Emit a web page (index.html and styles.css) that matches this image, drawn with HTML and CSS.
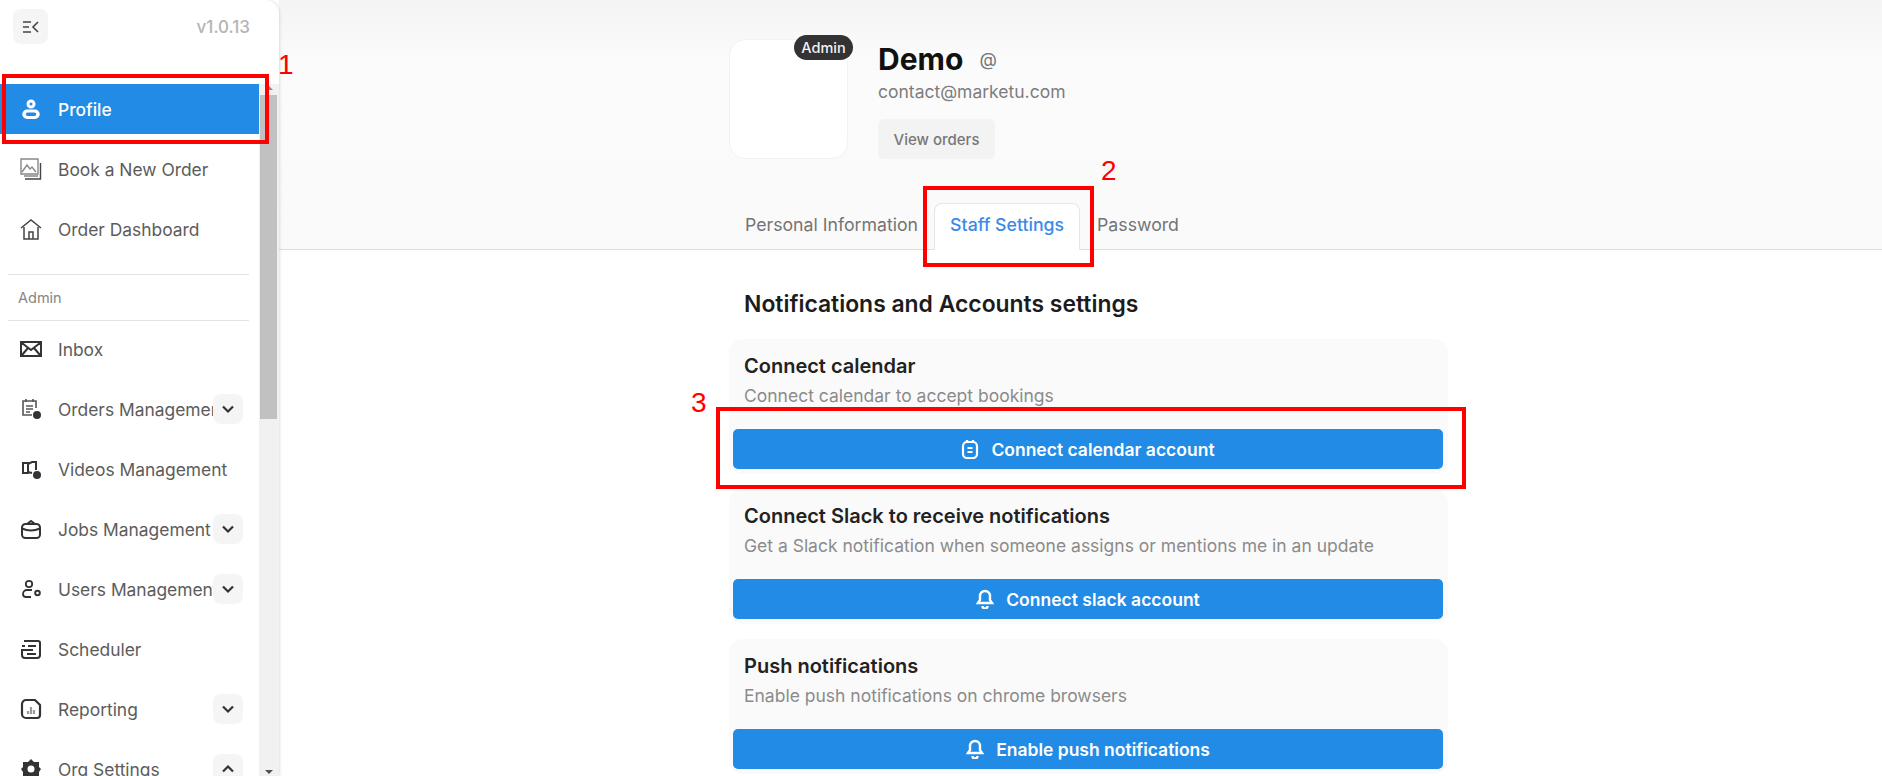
FILE: index.html
```html
<!DOCTYPE html>
<html lang="en">
<head>
  <meta charset="UTF-8" />
  <title>Profile</title>
  <link rel="stylesheet" href="styles.css">
</head>
<body>
  <aside class="sidebar">
    <div class="side-top">
      <button class="collapse">
        <svg width="18" height="14" viewBox="0 0 18 14" fill="none" stroke="#444" stroke-width="1.6"><path d="M1 2h8M1 7h6M1 12h8M16 2l-5 5 5 5"/></svg>
      </button>
      <span class="version">v1.0.13</span>
    </div>
    <div class="side-scroll">
      <nav class="nav">
        <a class="nav-item active">
          <svg class="nav-icon" viewBox="0 0 22 22" fill="#fff"><path fill-rule="evenodd" d="M11 1.500a4.500 4.500 0 1 1 0 9 4.500 4.500 0 0 1 0-9zm0 3a1.500 1.500 0 1 0 0 3 1.500 1.500 0 0 0 0-3zM7 11.500h8a4.750 4.750 0 0 1 0 9.500H7a4.750 4.750 0 0 1 0-9.500zm.5 3a1.750 1.750 0 0 0 0 3.500h7a1.750 1.750 0 0 0 0-3.500z"/></svg>
          <span class="nav-label">Profile</span>
        </a>
        <a class="nav-item">
          <svg class="nav-icon" viewBox="0 0 22 22" fill="none" stroke="#444" stroke-width="1.400"><path d="M1 1h17v15H1z" stroke="#888"/><path d="M20.500 5v16H5"/><path d="M2 14l5-7 3 4 2-2 4 5M4 18h14" stroke="#888"/></svg>
          <span class="nav-label">Book a New Order</span>
        </a>
        <a class="nav-item">
          <svg class="nav-icon" viewBox="0 0 22 22" fill="none" stroke="#444" stroke-width="1.500"><path d="M1 10l10-8 10 8M4 9v12h14V9M9 21v-7h4v7"/></svg>
          <span class="nav-label">Order Dashboard</span>
        </a>
        <div class="nav-group">Admin</div>
        <a class="nav-item">
          <svg class="nav-icon" viewBox="0 0 22 22" fill="none" stroke="#333" stroke-width="2"><path d="M1 4h20v14H1zM2 5l9 7 9-7M2 17l6-7M20 17l-6-7"/></svg>
          <span class="nav-label">Inbox</span>
        </a>
        <a class="nav-item">
          <svg class="nav-icon" viewBox="0 0 22 22" fill="none" stroke="#555" stroke-width="1.600"><path d="M12 17H3V3h13v7M6 1v3M13 1v3M6 8h7M6 11h7M6 14h4"/><circle cx="17" cy="17" r="4" fill="#333" stroke="none"/></svg>
          <span class="nav-label clip">Orders Management</span>
          <span class="chev"><svg width="14" height="14" viewBox="0 0 14 14" fill="none" stroke="#333" stroke-width="2.200"><path d="M2 4.500l5 5 5-5"/></svg></span>
        </a>
        <a class="nav-item">
          <svg class="nav-icon" viewBox="0 0 22 22" fill="none" stroke="#333" stroke-width="2"><path d="M3 5h5v10H3zM8 6l4-2h4v8M8 14l4 1"/><circle cx="17" cy="17" r="4" fill="#333" stroke="none"/></svg>
          <span class="nav-label">Videos Management</span>
        </a>
        <a class="nav-item">
          <svg class="nav-icon" viewBox="0 0 22 22" fill="none" stroke="#333" stroke-width="2"><path d="M7 6l4-3 4 3"/><rect x="2" y="6" width="18" height="14" rx="3.500"/><path d="M2 10.500q9 4 18 0"/></svg>
          <span class="nav-label clip">Jobs Management</span>
          <span class="chev"><svg width="14" height="14" viewBox="0 0 14 14" fill="none" stroke="#333" stroke-width="2.200"><path d="M2 4.500l5 5 5-5"/></svg></span>
        </a>
        <a class="nav-item">
          <svg class="nav-icon" viewBox="0 0 22 22" fill="none" stroke="#333" stroke-width="1.800"><circle cx="9" cy="6" r="3.200"/><path d="M12 12H7a4 4 0 0 0-4 4v0a3 3 0 0 0 3 3h5"/><circle cx="17.500" cy="15" r="2.300" stroke-width="2"/></svg>
          <span class="nav-label clip">Users Management</span>
          <span class="chev"><svg width="14" height="14" viewBox="0 0 14 14" fill="none" stroke="#333" stroke-width="2.200"><path d="M2 4.500l5 5 5-5"/></svg></span>
        </a>
        <a class="nav-item">
          <svg class="nav-icon" viewBox="0 0 22 22" fill="none" stroke="#333" stroke-width="2"><path d="M4 3h14a2 2 0 0 1 2 2v12a3 3 0 0 1-3 3H5a3 3 0 0 1-3-3v-5h11M2 8h3M8 8h8M7 16h9"/></svg>
          <span class="nav-label">Scheduler</span>
        </a>
        <a class="nav-item">
          <svg class="nav-icon" viewBox="0 0 22 22" fill="none" stroke="#333" stroke-width="2.200"><path d="M6 2h9l5 5v10a3 3 0 0 1-3 3H6a4 4 0 0 1-4-4V6a4 4 0 0 1 4-4z"/><path d="M8 16v-3M11 16V9M14 16v-4" stroke="#999"/></svg>
          <span class="nav-label">Reporting</span>
          <span class="chev"><svg width="14" height="14" viewBox="0 0 14 14" fill="none" stroke="#333" stroke-width="2.200"><path d="M2 4.500l5 5 5-5"/></svg></span>
        </a>
        <a class="nav-item">
          <svg class="nav-icon" viewBox="0 0 22 22" fill="#333"><path fill-rule="evenodd" d="M11 1l3 3h5v5l2 2-2 3v5h-5l-3 2-3-2H3v-5l-2-3 2-2V4h5zm0 6.500a3.500 3.500 0 1 0 0 7 3.500 3.500 0 0 0 0-7z"/></svg>
          <span class="nav-label">Org Settings</span>
          <span class="chev"><svg width="14" height="14" viewBox="0 0 14 14" fill="none" stroke="#333" stroke-width="2.200"><path d="M2 9.500l5-5 5 5"/></svg></span>
        </a>
      </nav>
      <div class="scrollbar">
        <span class="arrow up"></span>
        <span class="thumb"></span>
        <span class="arrow down"></span>
      </div>
    </div>
  </aside>

  <main class="main">
    <header class="hero">
      <div class="hero-inner">
        <div class="profile">
          <div class="avatar"><span class="badge">Admin</span></div>
          <div class="who">
            <h1 class="name">Demo <span class="handle">@</span></h1>
            <div class="email">contact@marketu.com</div>
            <button class="btn-light">View orders</button>
          </div>
        </div>
        <div class="tabs">
          <a class="tab">Personal Information</a>
          <a class="tab active">Staff Settings</a>
          <a class="tab">Password</a>
        </div>
      </div>
    </header>

    <section class="content">
      <h2 class="title">Notifications and Accounts settings</h2>

      <div class="card">
        <h3>Connect calendar</h3>
        <p>Connect calendar to accept bookings</p>
        <button class="btn-blue">
          <svg width="18" height="20" viewBox="0 0 18 20" fill="none" stroke="#fff" stroke-width="2.200"><rect x="2" y="3" width="14" height="16" rx="4"/><path d="M6 1v3M12 1v3M6.500 9h5M6.500 13h5"/></svg>
          Connect calendar account
        </button>
      </div>

      <div class="card">
        <h3>Connect Slack to receive notifications</h3>
        <p>Get a Slack notification when someone assigns or mentions me in an update</p>
        <button class="btn-blue">
          <svg width="18" height="20" viewBox="0 0 18 20" fill="none" stroke="#fff" stroke-width="2.400"><path d="M9 2a5 5 0 0 1 5 5v4l2 3H2l2-3V7a5 5 0 0 1 5-5z"/><path d="M6.500 17a2.500 2.500 0 0 0 5 0"/></svg>
          Connect slack account
        </button>
      </div>

      <div class="card">
        <h3>Push notifications</h3>
        <p>Enable push notifications on chrome browsers</p>
        <button class="btn-blue">
          <svg width="18" height="20" viewBox="0 0 18 20" fill="none" stroke="#fff" stroke-width="2.400"><path d="M9 2a5 5 0 0 1 5 5v4l2 3H2l2-3V7a5 5 0 0 1 5-5z"/><path d="M6.500 17a2.500 2.500 0 0 0 5 0"/></svg>
          Enable push notifications
        </button>
      </div>
    </section>
  </main>

  <!-- red annotations drawn over the screenshot -->
  <div class="mark mark-1"></div>
  <div class="mark mark-2"></div>
  <div class="mark mark-3"></div>
  <span class="mark-num num-1">1</span>
  <span class="mark-num num-2">2</span>
  <span class="mark-num num-3">3</span>
</body>
</html>
```

FILE: styles.css
```css
* {
  box-sizing: border-box;
}
html, body {
  height: 100%;
}
body {
  margin: 0;
  height: 776px;
  overflow: hidden;
  display: flex;
  font-family: Inter, 'Noto Sans', sans-serif;
  color: #1a1a1a;
  background: #fff;
}
button {
  font-family: inherit;
  border: 0;
}

/* sidebar */
.sidebar {
  width: 279px;
  height: 776px;
  flex-shrink: 0;
  display: flex;
  flex-direction: column;
  background: #fff;
  border-radius: 0 14px 0 0;
  box-shadow: 1px 0 3px rgba(0,0,0,0.12);
  position: relative;
  z-index: 1;
}
.side-top {
  height: 84px;
  flex-shrink: 0;
  display: flex;
  justify-content: space-between;
  align-items: flex-start;
  padding: 9px 29px 0 13px;
}
.collapse {
  width: 35px;
  height: 35px;
  border-radius: 8px;
  background: #f5f5f5;
  display: flex;
  align-items: center;
  justify-content: center;
  padding: 0;
}
.version {
  font-size: 17px;
  font-weight: 500;
  color: #b4b4b4;
  margin-top: 8px;
}
.side-scroll {
  flex: 1;
  min-height: 0;
  display: flex;
  overflow: hidden;
}
.nav {
  width: 259px;
  flex-shrink: 0;
  display: flex;
  flex-direction: column;
  gap: 10px;
}
.nav-item {
  height: 50px;
  flex-shrink: 0;
  display: flex;
  align-items: center;
  padding: 0 16px 0 20px;
  font-size: 17.4px;
  color: #5c5c5c;
}
.nav-item.active {
  background: #228be6;
  color: #fff;
  font-weight: 500;
}
.nav-icon {
  width: 22px;
  height: 22px;
  flex-shrink: 0;
  margin-right: 16px;
}
.nav-label {
  white-space: nowrap;
}
.nav-label.clip {
  flex: 1;
  min-width: 0;
  overflow: hidden;
}
.nav-label + .chev {
  margin-left: auto;
}
.chev {
  width: 30px;
  height: 30px;
  flex-shrink: 0;
  border-radius: 8px;
  background: #f5f5f5;
  display: flex;
  align-items: center;
  justify-content: center;
}
.nav-group {
  margin: 10px 10px -7px 8px;
  height: 47px;
  flex-shrink: 0;
  border-top: 1px solid #e3e3e3;
  border-bottom: 1px solid #e3e3e3;
  padding: 14px 0 0 10px;
  font-size: 14.5px;
  color: #868686;
}
.scrollbar {
  width: 20px;
  flex-shrink: 0;
  display: flex;
  flex-direction: column;
  background: #f1f1f1;
}
.thumb {
  height: 324px;
  margin: 0 2px 0 1px;
  background: #c1c1c1;
}
.arrow {
  width: 0;
  flex-shrink: 0;
  align-self: center;
  border-left: 4px solid transparent;
  border-right: 4px solid transparent;
}
.arrow.up {
  margin-top: 2px;
  height: 0;
  margin-bottom: 5px;
  border-bottom: 4px solid #8a8a8a;
}
.arrow.down {
  height: 0;
  margin-top: auto;
  margin-bottom: 2px;
  border-top: 4px solid #505050;
}

/* main */
.main {
  flex: 1;
  min-width: 0;
}
.hero {
  height: 250px;
  background: linear-gradient(#f4f4f4 0, #fbfbfb 60px, #fafafa 100%);
  border-bottom: 1px solid #dedede;
}
.hero-inner {
  margin-left: 450px;
  padding-top: 39px;
  display: flex;
  flex-direction: column;
  height: 100%;
}
.profile {
  display: flex;
}
.avatar {
  width: 119px;
  height: 120px;
  background: #fff;
  border: 1px solid #f2f2f2;
  border-radius: 16px;
  position: relative;
}
.badge {
  position: absolute;
  top: -5px;
  right: -6px;
  width: 59px;
  height: 25px;
  line-height: 25px;
  text-align: center;
  border-radius: 13px;
  background: #333;
  color: #f2f2f2;
  font-size: 14.5px;
  font-weight: 500;
}
.who {
  margin-left: 30px;
}
.name {
  margin: 5px 0 0;
  font-size: 30px;
  line-height: 30px;
  font-weight: 700;
  color: #111;
}
.handle {
  font-size: 18px;
  font-weight: 400;
  color: #777;
  margin-left: 9px;
  vertical-align: 4px;
}
.email {
  margin-top: 6px;
  font-size: 17.5px;
  line-height: 22px;
  color: #7d7d7d;
}
.btn-light {
  margin-top: 16px;
  width: 117px;
  height: 40px;
  display: block;
  padding: 0;
  border-radius: 6px;
  background: #f3f3f3;
  color: #777;
  font-size: 15px;
  font-weight: 500;
}
.tabs {
  margin-top: auto;
  display: flex;
  align-items: flex-end;
  margin-left: 16px;
  margin-bottom: -1px;
}
.tab {
  height: 47px;
  line-height: 43px;
  font-size: 17.7px;
  color: #747474;
  white-space: nowrap;
}
.tab.active {
  width: 146px;
  margin: 0 17px 0 16px;
  text-align: center;
  color: #3b8ae8;
  font-weight: 500;
  background: #fff;
  border: 1px solid #e6e6e6;
  border-bottom-color: #fff;
  border-radius: 8px 8px 0 0;
  line-height: 41px;
  padding: 0;
}

.content {
  margin-left: 450px;
  width: 719px;
}
.title {
  margin: 0;
  padding: 42px 0 0 15px;
  font-size: 22.9px;
  line-height: 24px;
  font-weight: 600;
  color: #1c1c1c;
}
.card {
  height: 135px;
  margin-top: 15px;
  padding: 15px 4px 0;
  background: #fafafa;
  border-radius: 14px;
}
.title + .card {
  margin-top: 23px;
}
.card h3 {
  margin: 0 0 0 11px;
  font-size: 20px;
  line-height: 24px;
  font-weight: 600;
  color: #222;
}
.card p {
  margin: 7px 0 0 11px;
  font-size: 17.5px;
  line-height: 22px;
  color: #8b8b8b;
}
.btn-blue {
  margin-top: 22px;
  width: 710px;
  height: 40px;
  border-radius: 5px;
  background: #228be6;
  color: #fff;
  font-size: 17.5px;
  font-weight: 600;
  display: flex;
  align-items: center;
  justify-content: center;
  gap: 12px;
  padding: 0;
}

/* annotations */
.mark {
  position: absolute;
  border: 4px solid #f00;
  z-index: 2;
}
.mark-1 {
  left: 2px;
  top: 74px;
  width: 267px;
  height: 70px;
}
.mark-2 {
  left: 923px;
  top: 186px;
  width: 171px;
  height: 81px;
}
.mark-3 {
  left: 716px;
  top: 407px;
  width: 750px;
  height: 82px;
}
.mark-num {
  position: absolute;
  z-index: 2;
  font-family: 'Liberation Sans', sans-serif;
  font-size: 28px;
  line-height: 30px;
  color: #f00;
}
.num-1 {
  left: 278px;
  top: 50px;
}
.num-2 {
  left: 1101px;
  top: 156px;
}
.num-3 {
  left: 691px;
  top: 388px;
}
```
